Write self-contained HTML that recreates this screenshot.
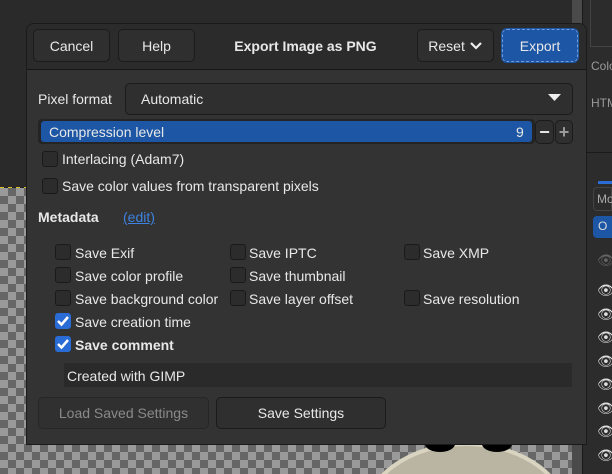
<!DOCTYPE html>
<html style="width:612px;height:474px;overflow:hidden"><head><meta charset="utf-8"><style>
*{box-sizing:border-box;margin:0;padding:0}
body{width:612px;height:474px;overflow:hidden;background:#2a2a2a;font-family:"Liberation Sans","DejaVu Sans",sans-serif;font-size:14px;color:#e8e8e8;position:relative}
.abs{position:absolute}
.checker{background-color:#9a9a9a;background-image:linear-gradient(45deg,#666 25%,transparent 25%,transparent 75%,#666 75%),linear-gradient(45deg,#666 25%,transparent 25%,transparent 75%,#666 75%);background-size:16px 16px;background-position:0 0,8px 8px}
.btn{position:absolute;background:#2f2f2f;border:1px solid #1b1b1b;border-radius:5px;display:flex;align-items:center;justify-content:center;font-size:14px;color:#e8e8e8}
.cb{position:absolute;width:16px;height:16px;border:1px solid #1a1a1a;border-radius:3px;background:#2c2c2c}
.cb.on{background:#2a6cd6;border-color:#2a6cd6}
.lbl{position:absolute;font-size:14px;line-height:16px;white-space:nowrap}
.eye{position:absolute;left:597px;color:#ddd;font-size:14px;line-height:16px}
</style></head><body>
<div class="abs" style="left:0;top:0;width:612px;height:474px;overflow:hidden">
<div class="abs checker" style="left:0;top:188px;width:572px;height:286px"></div>
<div class="abs" style="left:0;top:187px;width:572px;height:1px;background:repeating-linear-gradient(90deg,#e0c020 0 4px,#222 4px 8px)"></div>
<svg class="abs" style="left:360px;top:430px" width="212" height="44" viewBox="0 0 212 44">
<ellipse cx="106" cy="90" rx="103" ry="76" fill="#b9b5a2" stroke="#d8d4c0" stroke-width="4"/>
<ellipse cx="80" cy="14" rx="15" ry="8" fill="#000"/>
<ellipse cx="137" cy="14" rx="15" ry="8" fill="#000"/>
</svg>
<div class="abs" style="left:572px;top:0;width:10px;height:474px;background:#4a4a4a"></div>
<div class="abs" style="left:582px;top:0;width:30px;height:474px;background:#2c2c2c;border-left:1px solid #1a1a1a"></div>
<div class="abs" style="left:590px;top:0;width:22px;height:47px;border-left:1px solid #444;border-bottom:1px solid #444"></div>
<div class="lbl" style="left:591px;top:58px;color:#999;font-size:12px">Colo</div>
<div class="lbl" style="left:591px;top:95px;color:#999;font-size:12px">HTM</div>
<div class="abs" style="left:585px;top:152px;width:27px;height:1px;background:#1a1a1a"></div>
<div class="abs" style="left:598px;top:181px;width:14px;height:3px;background:#2a6cd6"></div>
<div class="abs" style="left:593px;top:187px;width:19px;height:24px;border:1px solid #444;border-radius:4px 0 0 4px;color:#aaa;font-size:12px;padding:4px 0 0 3px">Mo</div>
<div class="abs" style="left:593px;top:216px;width:19px;height:22px;background:#1c56a5;border-radius:4px 0 0 4px;color:#ddd;font-size:12px;padding:3px 0 0 5px">O</div>
<div class="eye" style="top:252px;color:#666">👁</div>
<div class="eye" style="top:282px">👁</div><div class="eye" style="top:306px">👁</div><div class="eye" style="top:329px">👁</div><div class="eye" style="top:353px">👁</div><div class="eye" style="top:376px">👁</div><div class="eye" style="top:400px">👁</div><div class="eye" style="top:423px">👁</div><div class="eye" style="top:447px">👁</div>
<div class="abs" style="left:26px;top:23px;width:561px;height:422px;background:#333;border:1px solid #1a1a1a;border-radius:8px 8px 0 0;overflow:hidden">
  <div class="abs" style="left:0;top:0;width:561px;height:46px;background:#2b2b2b;border-bottom:1px solid #161616"></div>
</div>
<div class="btn" style="left:33px;top:29px;width:77px;height:33px">Cancel</div>
<div class="btn" style="left:118px;top:29px;width:77px;height:33px">Help</div>
<div class="lbl" style="left:197px;top:38px;width:217px;text-align:center;font-weight:bold">Export Image as PNG</div>
<div class="btn" style="left:417px;top:29px;width:77px;height:33px">Reset&nbsp;<svg width="14" height="10" viewBox="0 0 14 10"><path d="M2 2l5 5 5-5" stroke="#eee" stroke-width="2.2" fill="none"/></svg></div>
<div class="btn" style="left:502px;top:29px;width:76px;height:33px;background:#1c56a5;border:1px dashed #6f9be0;outline:1px solid #1c56a5">Export</div>
<div class="lbl" style="left:38px;top:91px">Pixel format</div>
<div class="btn" style="left:125px;top:83px;width:448px;height:32px;justify-content:flex-start;padding-left:15px">Automatic</div>
<svg class="abs" style="left:548px;top:94px" width="14" height="9"><path d="M0 0h13L6.5 7z" fill="#eee"/></svg>
<div class="abs" style="left:38px;top:119px;width:497px;height:25px;background:#242424;border-radius:4px"></div>
<div class="abs" style="left:41px;top:121px;width:491px;height:21px;background:#1c56a5;border-radius:3px"></div>
<div class="lbl" style="left:49px;top:124px">Compression level</div>
<div class="lbl" style="left:516px;top:124px">9</div>
<div class="btn" style="left:535px;top:120px;width:19px;height:24px;font-size:18px;font-weight:bold">−</div>
<div class="btn" style="left:555px;top:120px;width:18px;height:24px;font-size:18px;font-weight:bold;color:#999">+</div>
<div class="cb" style="left:42px;top:151px"></div><div class="lbl" style="left:62px;top:151px">Interlacing (Adam7)</div>
<div class="cb" style="left:42px;top:178px"></div><div class="lbl" style="left:62px;top:178px">Save color values from transparent pixels</div>
<div class="lbl" style="left:38px;top:209px;font-weight:bold">Metadata</div>
<div class="lbl" style="left:123px;top:209px;color:#3d82e0;text-decoration:underline">(edit)</div>
<div class="cb" style="left:55px;top:244px"></div><div class="lbl" style="left:75px;top:245px">Save Exif</div>
<div class="cb" style="left:230px;top:244px"></div><div class="lbl" style="left:249px;top:245px">Save IPTC</div>
<div class="cb" style="left:404px;top:244px"></div><div class="lbl" style="left:423px;top:245px">Save XMP</div>
<div class="cb" style="left:55px;top:267px"></div><div class="lbl" style="left:75px;top:268px">Save color profile</div>
<div class="cb" style="left:230px;top:267px"></div><div class="lbl" style="left:249px;top:268px">Save thumbnail</div>
<div class="cb" style="left:55px;top:290px"></div><div class="lbl" style="left:75px;top:291px">Save background color</div>
<div class="cb" style="left:230px;top:290px"></div><div class="lbl" style="left:249px;top:291px">Save layer offset</div>
<div class="cb" style="left:404px;top:290px"></div><div class="lbl" style="left:423px;top:291px">Save resolution</div>
<div class="cb on" style="left:55px;top:313px"><svg width="14" height="14" viewBox="0 0 14 14"><path d="M2 7l3.5 3.5L12 3" stroke="#fff" stroke-width="2.5" fill="none"/></svg></div><div class="lbl" style="left:75px;top:314px">Save creation time</div>
<div class="cb on" style="left:55px;top:336px"><svg width="14" height="14" viewBox="0 0 14 14"><path d="M2 7l3.5 3.5L12 3" stroke="#fff" stroke-width="2.5" fill="none"/></svg></div><div class="lbl" style="left:75px;top:337px;font-weight:bold">Save comment</div>
<div class="abs" style="left:64px;top:363px;width:508px;height:24px;background:#2a2a2a"></div>
<div class="lbl" style="left:67px;top:368px">Created with GIMP</div>
<div class="btn" style="left:38px;top:397px;width:171px;height:32px;color:#8a8a8a;background:#303030;border-color:#262626">Load Saved Settings</div>
<div class="btn" style="left:216px;top:397px;width:170px;height:32px">Save Settings</div>
</div>
</body></html>
